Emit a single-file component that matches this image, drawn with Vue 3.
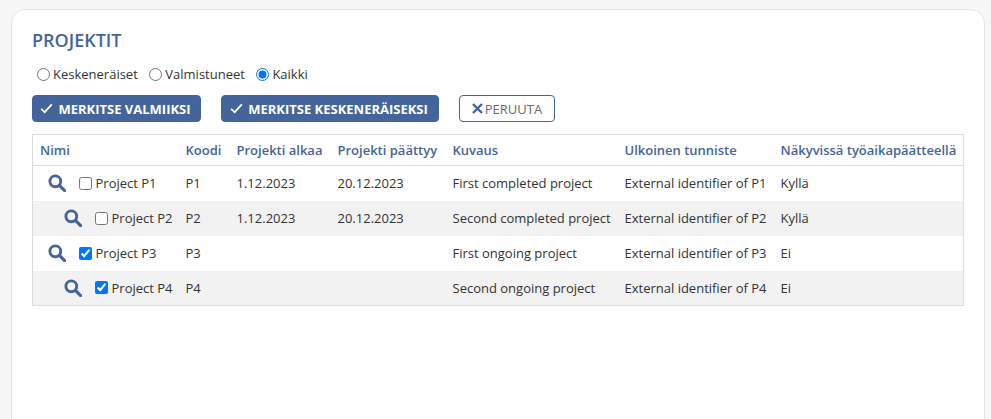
<script setup>
const columns = ['Nimi', 'Koodi', 'Projekti alkaa', 'Projekti päättyy', 'Kuvaus', 'Ulkoinen tunniste', 'Näkyvissä työaikapäätteellä']
const rows = [
  { name: 'Project P1', code: 'P1', start: '1.12.2023', end: '20.12.2023', desc: 'First completed project', ext: 'External identifier of P1', vis: 'Kyllä', checked: false, child: false },
  { name: 'Project P2', code: 'P2', start: '1.12.2023', end: '20.12.2023', desc: 'Second completed project', ext: 'External identifier of P2', vis: 'Kyllä', checked: false, child: true },
  { name: 'Project P3', code: 'P3', start: '', end: '', desc: 'First ongoing project', ext: 'External identifier of P3', vis: 'Ei', checked: true, child: false },
  { name: 'Project P4', code: 'P4', start: '', end: '', desc: 'Second ongoing project', ext: 'External identifier of P4', vis: 'Ei', checked: true, child: true },
]
const filters = [
  { label: 'Keskeneräiset', checked: false },
  { label: 'Valmistuneet', checked: false },
  { label: 'Kaikki', checked: true },
]
</script>

<template>
  <div class="page">
    <main class="card">
      <h1 class="title">PROJEKTIT</h1>
      <div class="filters">
        <label v-for="f in filters" :key="f.label" class="radio">
          <input type="radio" name="state" :checked="f.checked" />
          <span>{{ f.label }}</span>
        </label>
      </div>
      <div class="actions">
        <button class="btn primary">
          <svg class="check" viewBox="0 0 14 12" width="13" height="11"><path d="M1.2 6.3 5 10 12.8 1.6" fill="none" stroke="currentColor" stroke-width="1.9" /></svg>
          MERKITSE VALMIIKSI
        </button>
        <button class="btn primary second">
          <svg class="check" viewBox="0 0 14 12" width="13" height="11"><path d="M1.2 6.3 5 10 12.8 1.6" fill="none" stroke="currentColor" stroke-width="1.9" /></svg>
          MERKITSE KESKENERÄISEKSI
        </button>
        <button class="btn outline">
          <svg class="cross" viewBox="0 0 11 11" width="11" height="11"><path d="M1 1 10 10M10 1 1 10" fill="none" stroke="#44659b" stroke-width="2.4" /></svg>
          <span>PERUUTA</span>
        </button>
      </div>
      <table class="grid">
        <thead>
          <tr><th v-for="c in columns" :key="c">{{ c }}</th></tr>
        </thead>
        <tbody>
          <tr v-for="r in rows" :key="r.code">
            <td>
              <div class="name" :class="{ child: r.child }">
                <svg class="search" viewBox="0 0 18 18" width="18" height="18"><circle cx="7.3" cy="7.3" r="5.4" fill="none" stroke="#44659b" stroke-width="2.9" /><path d="M11.4 11.4 16.6 16.6" stroke="#44659b" stroke-width="3.1" stroke-linecap="round" /></svg>
                <input type="checkbox" class="cb" :checked="r.checked" />
                <span>{{ r.name }}</span>
              </div>
            </td>
            <td>{{ r.code }}</td>
            <td>{{ r.start }}</td>
            <td>{{ r.end }}</td>
            <td>{{ r.desc }}</td>
            <td>{{ r.ext }}</td>
            <td>{{ r.vis }}</td>
          </tr>
        </tbody>
      </table>
    </main>
  </div>
</template>

<style>
html, body { margin: 0; background: #f7f7f7; overflow: hidden; }
</style>

<style scoped>
.page {
  height: 419px;
  overflow: hidden;
  padding: 9px 6px 0 11px;
  box-sizing: border-box;
  font-family: "Open Sans", sans-serif;
  font-size: 13px;
  color: #333;
}
.card {
  box-sizing: border-box;
  height: 500px;
  background: #fff;
  border: 1px solid #e6e6e6;
  border-radius: 14px;
  padding: 18px 20px 0 20px;
}
.title {
  margin: 0;
  font-size: 18px;
  line-height: 24px;
  font-weight: 600;
  color: #44659b;
}
.filters {
  display: flex;
  gap: 11.5px;
  margin-top: 13px;
  padding-left: 5px;
  height: 18px;
  align-items: center;
}
.radio { display: flex; align-items: center; gap: 3px; }
.radio input { margin: 0; width: 13px; height: 13px; }
.actions {
  display: flex;
  align-items: center;
  margin-top: 12px;
}
.btn {
  box-sizing: border-box;
  height: 27px;
  border-radius: 4px;
  font-family: inherit;
  font-size: 13px;
  padding: 0;
  display: flex;
  align-items: center;
  justify-content: center;
}
.primary {
  background: #44659b;
  border: 1px solid #44659b;
  color: #fff;
  font-weight: 700;
  gap: 5px;
  width: 169px;
  padding-right: 2px;
}
.second { width: 218px; margin-left: 20px; }
.outline {
  width: 96px;
  margin-left: 20px;
  background: #fff;
  border: 1px solid #44659b;
  color: #6b6b6b;
  gap: 2px;
  font-weight: 400;
}
.grid {
  margin-top: 12px;
  width: 932px;
  border-collapse: collapse;
  border: 1px solid #dcdcdc;
  table-layout: fixed;
}
.grid th {
  box-sizing: border-box;
  height: 31px;
  padding: 0 0 0 7px;
  text-align: left;
  font-weight: 600;
  color: #44659b;
  border-bottom: 1px solid #dcdcdc;
  white-space: nowrap;
}
.grid th:nth-child(1) { width: 146px; }
.grid th:nth-child(2) { width: 51px; }
.grid th:nth-child(3) { width: 101px; }
.grid th:nth-child(4) { width: 115px; }
.grid th:nth-child(5) { width: 172px; }
.grid th:nth-child(6) { width: 156px; }
.grid td {
  box-sizing: border-box;
  height: 35px;
  padding: 0 0 0 7px;
  white-space: nowrap;
}
.grid tbody tr:nth-child(even) { background: #f2f2f2; }
.name { display: flex; align-items: center; padding-left: 8px; }
.name.child { padding-left: 24px; }
.search { flex: none; }
.cb {
  margin: 0 3.5px 0 13px;
  width: 13px;
  height: 13px;
  flex: none;
}
</style>
